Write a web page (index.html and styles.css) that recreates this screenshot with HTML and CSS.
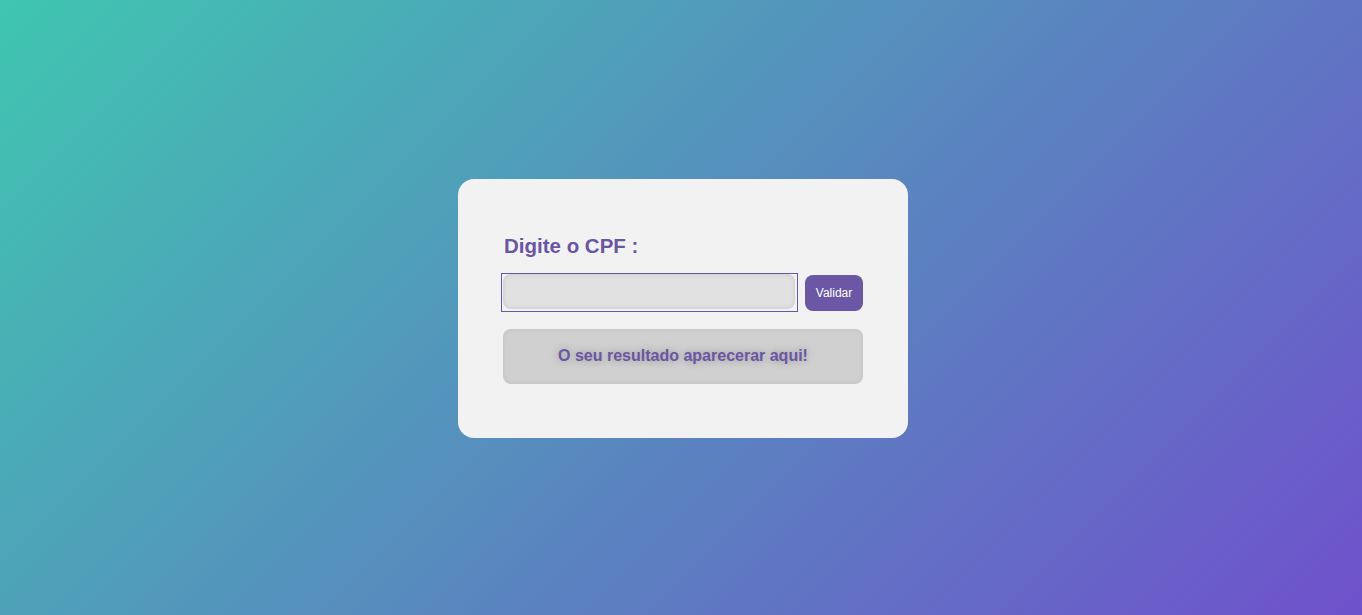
FILE: index.html
```html
<!DOCTYPE html>
<html lang="pt-BR">
<head>
<meta charset="utf-8">
<title>Validador de CPF</title>
<link rel="stylesheet" href="styles.css">
</head>
<body>
<main class="page">
  <section class="card">
    <h1 class="title">Digite o CPF :</h1>
    <div class="row">
      <div class="field-wrap"><div class="field"></div></div>
      <button class="btn" type="button">Validar</button>
    </div>
    <div class="result">O seu resultado aparecerar aqui!</div>
  </section>
</main>
</body>
</html>
```

FILE: styles.css
```css
* { box-sizing: border-box; }
html, body { margin: 0; height: 100%; }
body {
  font-family: "Liberation Sans", Arial, sans-serif;
  background: linear-gradient(135deg, #3fc6b0 0%, #6f51cc 100%);
}
.page {
  height: 615px;
  display: flex;
  align-items: center;
  justify-content: center;
}
.card {
  width: 450px;
  height: 259px;
  margin: 1px 0 0 4px;
  background: #f2f2f2;
  border-radius: 16px;
  padding: 55px 45px 54px 45px;
}
.title {
  margin: 0 0 0 1px;
  font-size: 20.5px;
  line-height: 23px;
  font-weight: bold;
  color: #6a56a4;
}
.row {
  margin-top: 16px;
  display: flex;
  align-items: center;
  gap: 7px;
}
.field-wrap {
  margin-left: -2px;
  width: 297px;
  height: 39px;
  padding: 1px 0 1px 2px;
  background: #f2f2f2;
  box-shadow: 0 0 0 1px #6a56a4 inset;
}
.field {
  width: 292px;
  height: 35px;
  border-radius: 8px;
  background: #e1e1e1;
  box-shadow: inset 0 0 5px rgba(0, 0, 0, 0.12);
}
.btn {
  width: 58px;
  height: 36px;
  margin-top: 1px;
  border: none;
  border-radius: 8px;
  background: #6b57a5;
  color: #fff;
  font-family: "Liberation Sans", Arial, sans-serif;
  font-size: 12px;
  padding: 0;
}
.result {
  margin-top: 17px;
  height: 55px;
  border-radius: 8px;
  background: #d0d0d0;
  box-shadow: inset 0 0 5px rgba(0, 0, 0, 0.08);
  display: flex;
  align-items: center;
  justify-content: center;
  font-size: 16px;
  font-weight: bold;
  color: #6a56a4;
  text-shadow: 0 0 8px rgba(0, 0, 0, 0.3);
}
```
